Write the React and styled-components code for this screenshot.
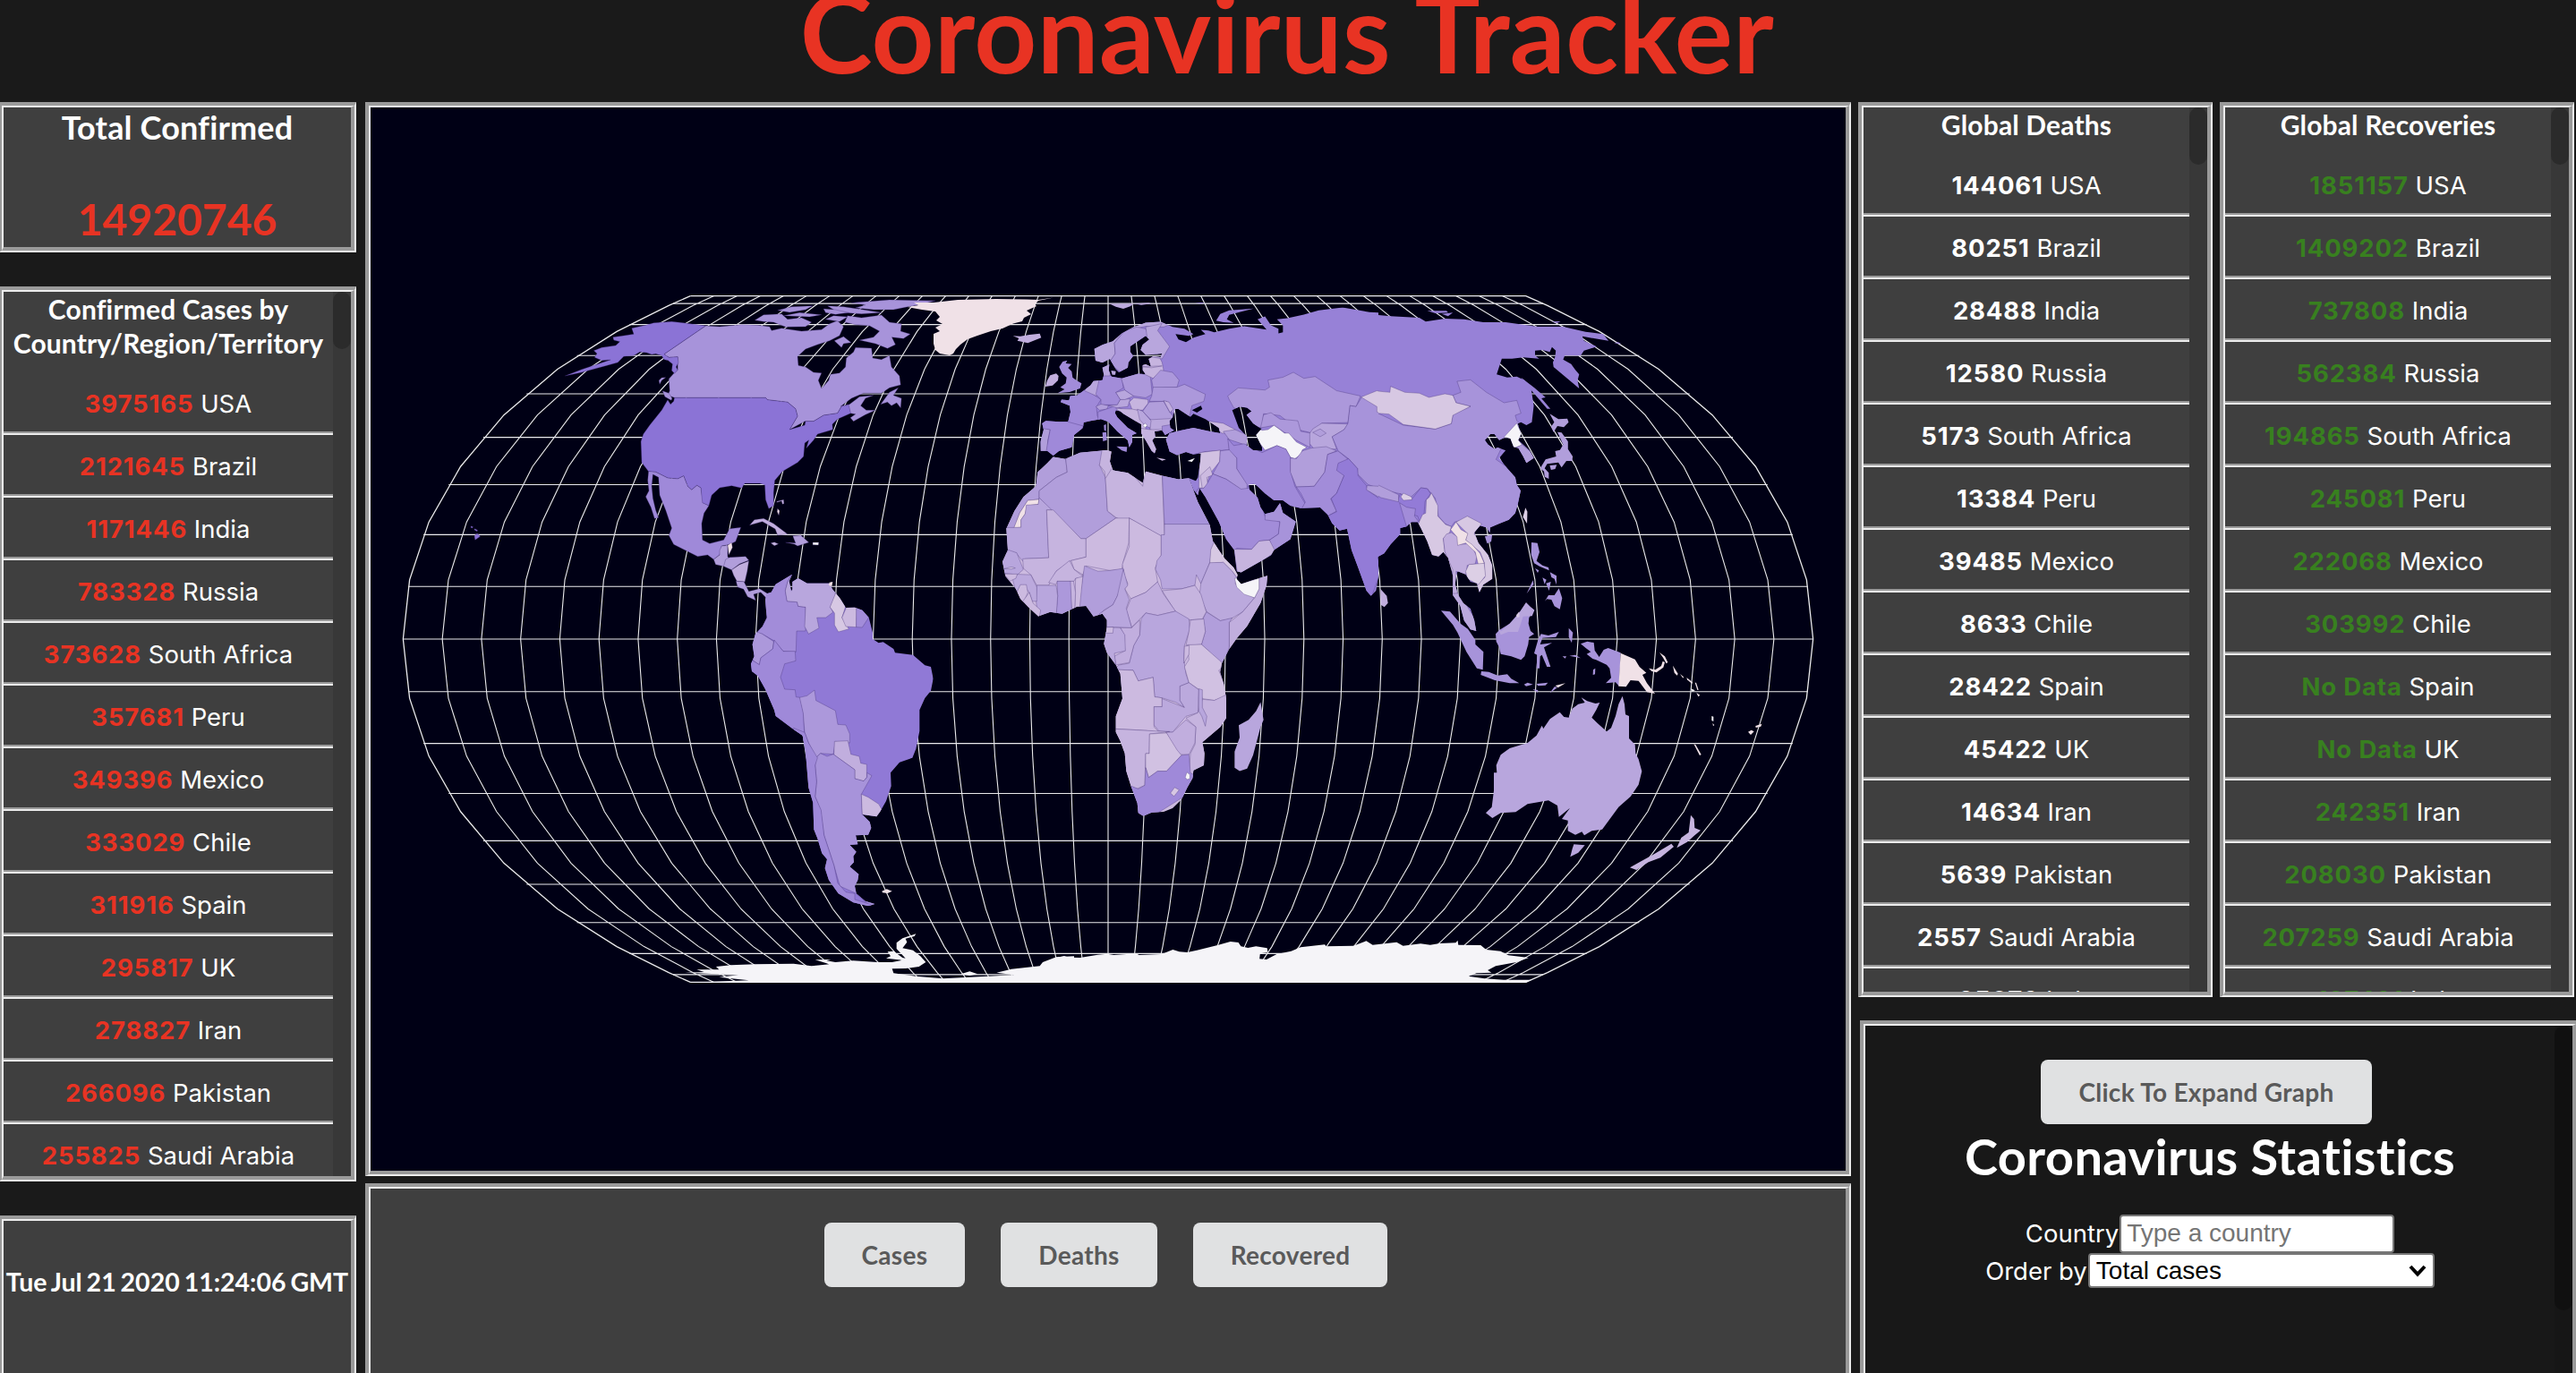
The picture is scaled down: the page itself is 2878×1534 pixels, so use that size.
import React from "react";
import styled, { createGlobalStyle } from "styled-components";

const GlobalStyle = createGlobalStyle`
  * { box-sizing: border-box; }
  html, body, #root { height: 100%; }
  body {
    margin: 0;
    overflow: hidden;
    background: #1a1a1a;
    color: #fff;
    font-family: Lato, "Liberation Sans", sans-serif;
  }
  h1, h2, h3, h4, p { margin: 0; }
`;

/* ---------- layout ---------- */

const Page = styled.div`
  height: 100%;
  display: flex;
  flex-direction: column;
  overflow: hidden;
`;

const Header = styled.header`
  flex: none;
  height: 114px;
  display: flex;
  justify-content: center;
  align-items: flex-start;
  padding-right: 2px;
`;

const Title = styled.h1`
  margin-top: -15px;
  color: #e83323;
  font-size: 122px;
  font-weight: 700;
  letter-spacing: 0.4px;
  line-height: 100px;
  white-space: nowrap;
`;

const Columns = styled.main`
  flex: 1;
  min-height: 0;
  display: grid;
  grid-template-columns: 400px 1660px 802px;
  column-gap: 10px;
  margin-left: -2px;
`;

const LeftColumn = styled.div`
  display: grid;
  grid-template-rows: 168px 1000px 200px;
  row-gap: 38px;
`;

const MiddleColumn = styled.div`
  display: grid;
  grid-template-rows: 1200px 240px;
  row-gap: 8px;
`;

const RightColumn = styled.div`
  display: grid;
  grid-template-rows: 1000px 440px;
  row-gap: 26px;
  margin-left: -2px;
`;

const ListPair = styled.div`
  display: grid;
  grid-template-columns: 396px 396px;
  column-gap: 8px;
`;

/* Grooved frame: a 4px grey band next to a 2px light band on every side. */
const Frame = styled.section`
  min-width: 0;
  min-height: 0;
  display: flex;
  border-style: solid;
  border-width: 4px 2px 2px 4px;
  border-color: #9a9a9a #ededed #ededed #9a9a9a;
  margin-left: ${(p) => p.$inset || 0}px;
`;

const FrameBody = styled.div`
  flex: 1;
  min-width: 0;
  display: flex;
  overflow: hidden;
  border-style: solid;
  border-width: 2px 4px 4px 2px;
  border-color: #ededed #9a9a9a #9a9a9a #ededed;
  background: ${(p) => p.$bg || "#3f3f3f"};
`;

const Stack = styled.div`
  flex: 1;
  min-width: 0;
  display: flex;
  flex-direction: column;
  align-items: center;
  text-align: center;
  padding-top: ${(p) => p.$top || 0}px;
`;

/* ---------- text ---------- */

const TotalLabel = styled.h3`
  font-size: 36px;
  letter-spacing: 0.15px;
  line-height: 44px;
`;

const TotalValue = styled.h2`
  margin-top: 51px;
  color: #e83323;
  font-size: 48px;
  line-height: 60px;
`;

const ListHeading = styled.h4`
  width: 100%;
  height: ${(p) => p.$height}px;
  flex: none;
  font-size: 30px;
  letter-spacing: 0.15px;
  line-height: 38px;
`;

const Timestamp = styled.h4`
  font-size: 28.5px;
  word-spacing: -2px;
  line-height: 38px;
  white-space: nowrap;
`;

const List = styled.ul`
  width: 100%;
  margin: 0;
  padding: 0;
  list-style: none;
`;

const Row = styled.li`
  height: 70px;
  padding-top: 2px;
  line-height: 66px;
  font-family: Inter, "Liberation Sans", sans-serif;
  font-size: 27.5px;
  white-space: nowrap;
  border-bottom: 2px solid #ededed;
  box-shadow: inset 0 -2px #9a9a9a;
`;

const Count = styled.strong`
  color: ${(p) => p.$color};
  font-weight: 700;
  letter-spacing: 0.85px;
`;

/* ---------- scrollbar ---------- */

const Track = styled.div`
  flex: none;
  width: 20px;
  background: ${(p) => p.$bg || "#383838"};
`;

const Thumb = styled.div`
  height: ${(p) => p.$length}px;
  border-radius: 10px;
  background: ${(p) => p.$bg || "#2b2b2b"};
`;

/* ---------- controls ---------- */

const Button = styled.button`
  height: 72px;
  margin: 0;
  margin-right: ${(p) => p.$shift || 0}px;
  padding: 0 42px;
  border: 0;
  border-radius: 8px;
  background: #e0e1e2;
  color: #5a5a5a;
  font: 700 28px Lato, sans-serif;
  letter-spacing: 0.3px;
  white-space: nowrap;
`;

const ButtonRow = styled.div`
  display: flex;
  gap: 40px;
  margin-right: 5px;
`;

const StatsTitle = styled.h1`
  font-size: 56px;
  letter-spacing: 0.4px;
  line-height: 72px;
  margin-bottom: 28px;
  white-space: nowrap;
`;

const Field = styled.label`
  display: flex;
  align-items: center;
  height: ${(p) => p.$height}px;
  font: 400 27.5px Inter, "Liberation Sans", sans-serif;
`;

const TextInput = styled.input`
  width: 307px;
  height: 43px;
  margin: 0 0 0 1px;
  padding: 0 6px;
  border: 2px solid #767676;
  border-radius: 4px;
  background: #fff;
  font: 28px "Liberation Sans", Arial, sans-serif;
  &::placeholder { color: #757575; opacity: 1; }
`;

const SelectBox = styled.span`
  width: 387px;
  height: 39px;
  margin-left: 1px;
  padding: 0 7px 0 7px;
  display: flex;
  align-items: center;
  justify-content: space-between;
  border: 2px solid #767676;
  border-radius: 4px;
  background: #fff;
  color: #000;
  font: 28px "Liberation Sans", Arial, sans-serif;
`;

/* ---------- data ---------- */

const COUNTRIES = ["USA", "Brazil", "India", "Russia", "South Africa", "Peru", "Mexico", "Chile", "Spain", "UK", "Iran", "Pakistan", "Saudi Arabia", "Italy"];
const CONFIRMED = ["3975165", "2121645", "1171446", "783328", "373628", "357681", "349396", "333029", "311916", "295817", "278827", "266096", "255825"];
const DEATHS = ["144061", "80251", "28488", "12580", "5173", "13384", "39485", "8633", "28422", "45422", "14634", "5639", "2557", "35073"];
const RECOVERED = ["1851157", "1409202", "737808", "562384", "194865", "245081", "222068", "303992", "No Data", "No Data", "242351", "208030", "207259", "197431"];

/* ---------- map ---------- */

const CX = 1238;
const CY = 714;
const SCALE = 291;

// Equal Earth projection, degrees in and pixels out.
function project(lon, lat) {
  const M = Math.sqrt(3) / 2;
  const l = (lon * Math.PI) / 180;
  const t = Math.asin(M * Math.sin((lat * Math.PI) / 180));
  const t2 = t * t;
  const t6 = t2 * t2 * t2;
  const x = (l * Math.cos(t)) / (M * (1.340264 - 3 * 0.081106 * t2 + t6 * (7 * 0.000893 + 9 * 0.003796 * t2)));
  const y = t * (1.340264 - 0.081106 * t2 + t6 * (0.000893 + 0.003796 * t2));
  return `${(CX + SCALE * x).toFixed(2)} ${(CY - SCALE * y).toFixed(2)}`;
}

function meridian(lon) {
  const pts = [];
  for (let i = -8; i <= 8; i += 1) pts.push(project(lon, i * 11.25));
  return `M${pts.join("L")}`;
}

const parallel = (lat) => `M${project(-180, lat)}L${project(180, lat)}`;

const steps = (from, to) => {
  const out = [];
  for (let v = from; v <= to; v += 10) out.push(v);
  return out;
};

const GRATICULE = [...steps(-170, 170).map(meridian), ...steps(-80, 80).map(parallel)].join("");
const SPHERE = [meridian(-180), meridian(180), parallel(90), parallel(-90)].join("");

const P = {
  usa: "#8b73d6", brazil: "#9079d6", india: "#937bd7", russia: "#9781d7",
  a: "#9f89d9", b: "#a28cd9", c: "#a793da", d: "#ac98db", e: "#b19edb", f: "#b8a6dd",
  g: "#bba9dd", h: "#c1aede", i: "#c6b4df", j: "#ccbae0", k: "#d1c1e2", l: "#d7c8e3",
  m: "#dccfe5", n: "#f0e1e7", w: "#f5f4f8",
};

// Each sheet has its own coordinate grid: origin in map pixels and units per pixel.
const NORTH_AMERICA = [
  [P.c, "870 162 905 165 960 158 1000 160 1030 165 1035 178 1060 170 1110 180 1160 175 1180 155 1200 145 1215 165 1205 195 1180 212 1150 225 1120 240 1100 265 1102 295 1120 300 1140 318 1160 320 1152 345 1160 372 1178 345 1182 325 1205 320 1220 300 1222 270 1240 250 1245 235 1285 237 1288 270 1310 275 1330 262 1335 300 1355 330 1358 360 1330 370 1310 388 1265 388 1235 405 1208 432 1230 425 1255 400 1290 395 1270 405 1258 430 1272 445 1295 445 1270 460 1240 482 1232 470 1245 458 1232 455 1228 435 1210 432 1200 455 1165 462 1140 482 1118 482 1080 510 1100 465 1095 440 1075 418 1025 410 1020 403 792 403 775 395 780 380 778 340 790 322 800 310 800 266 778 268 766 257"],
  [P.usa, "785 148 815 152 870 162 766 257 778 268 800 266 802 285 796 300 800 310 792 322 785 312 787 290 776 278 766 275 760 262 745 256 735 258 722 252 705 250 690 262 665 265 650 285 620 296 560 318 518 330 560 308 600 290 632 276 610 278 592 268 598 255 590 245 610 235 645 228 655 215 640 210 638 200 665 195 690 190 685 170 720 160 740 152"],
  [P.usa, "792 403 1020 403 1025 410 1075 418 1095 440 1100 465 1080 510 1118 495 1120 482 1140 482 1165 462 1200 455 1210 432 1228 427 1233 455 1200 475 1187 492 1188 510 1150 525 1140 545 1122 572 1128 545 1118 555 1115 600 1100 620 1062 650 1043 680 1040 720 1040 765 1028 775 1020 745 1018 695 1005 690 968 690 960 706 935 698 905 705 885 730 878 765 860 755 858 705 848 697 835 712 825 700 815 665 800 675 775 672 745 652 727 650 710 620 708 550 714 525 730 495 760 445 775 410 782 425 790 415"],
  [P.a, "727 650 745 652 775 672 800 675 815 665 825 700 835 712 848 697 858 705 862 755 878 765 866 790 860 825 862 880 880 892 915 880 930 842 958 838 945 885 930 895 910 900 905 930 890 945 875 930 850 935 820 915 790 895 778 865 785 840 770 780 755 730 752 670 738 660 735 700 738 740 745 780 752 805 742 808 733 770 720 735 728 715 725 680"],
  [P.e, "890 945 905 930 905 915 910 900 925 898 925 935 930 945 915 968 895 962"],
  [P.n, "925 898 935 888 937 905 928 930"],
  [P.e, "915 968 920 945 930 938 970 935 978 948 955 960 935 980"],
  [P.h, "935 980 955 962 978 950 974 985 968 1020 948 1018 940 998"],
  [P.e, "946 1018 966 1020 978 1052 1005 1043 1025 1060 1022 1075 1008 1055 990 1062 995 1082 975 1070 965 1045 950 1038"],
  [P.h, "980 830 992 812 1015 808 1040 825 1075 860 1050 864 1044 843 1012 818"],
  [P.e, "1070 888 1095 890 1088 866 1108 864 1128 888 1100 900 1092 894"],
  [P.i, "1033 890 1042 887 1052 893 1042 899"],
  [P.w, "1138 888 1153 888 1152 897 1138 896"],
  [P.n, "1050 775 1055 782 1053 797 1049 785"],
  [P.i, "1048 751 1065 745 1066 758 1062 760 1060 749 1048 754"],
  [P.usa, "293 880 291 866 298 858 306 868"],
  [P.usa, "283 833 288 836 286 840 282 838"],
  [P.usa, "292 842 299 847 298 851 291 846"],
  [P.c, "762 380 778 388 786 405 784 412 768 400"],
  [P.c, "755 358 753 345 760 336 770 335 760 345"],
  [P.c, "1308 425 1330 385 1352 370 1340 395 1360 405 1358 437 1348 420 1335 430 1325 418"],
  [P.c, "993 143 1015 125 1060 122 1075 140 1110 135 1135 150 1120 165 1070 166 1040 150 1015 148"],
  [P.c, "1218 150 1225 128 1260 135 1310 126 1330 150 1360 155 1358 180 1382 190 1365 205 1336 200 1345 225 1325 238 1295 222 1255 210 1290 200 1305 180 1280 162 1245 158"],
  [P.c, "1235 85 1330 75 1445 78 1400 92 1340 108 1290 108 1245 102 1270 92"],
  [P.c, "1175 95 1215 98 1250 105 1310 118 1260 122 1200 116"],
  [P.c, "1050 110 1085 98 1138 95 1120 108 1080 117"],
  [P.c, "1065 128 1105 118 1160 125 1130 132"],
  [P.c, "1165 105 1195 108 1228 118 1195 124 1170 118"],
  [P.c, "1170 140 1190 128 1225 132 1205 148"],
  [P.c, "1192 212 1215 198 1234 218 1215 222 1210 235"],
];

const GREENLAND = [
  [P.n, "1014 343 1026 341 1021 338 1043 338 1070 335 1113 334 1147 334.500 1160 335 1177 332.500 1160 336 1156 340 1158 342 1147 347 1152 351 1144 355 1142 359 1132 361.500 1120 367 1107 370 1092 375 1081 379 1073 385 1068 390 1065 395 1061 397 1050 395 1045 391 1043 384 1043 373 1050 370 1045 366 1053 362 1046 358 1050 354 1045 348 1030 346"],
];

const SOUTH_AMERICA = {
  outline: "470 190 485 185 500 158 555 125 545 148 552 182 556 175 556 150 575 138 605 155 680 155 690 175 715 205 735 237 765 236 790 245 812 270 825 320 825 342 845 355 860 352 895 375 900 388 960 395 1000 430 1020 435 1028 475 1020 515 1000 540 982 580 982 650 970 710 958 740 915 755 885 790 887 835 870 885 850 920 838 937 790 930 815 955 820 975 810 998 768 1000 775 1030 748 1032 770 1055 760 1070 762 1090 748 1105 778 1130 775 1150 765 1170 770 1195 800 1220 832 1230 810 1237 760 1225 710 1195 678 1150 665 1110 672 1080 655 1060 640 1010 628 980 625 890 610 840 600 720 590 665 560 645 500 600 495 580 465 510 440 465 420 450 417 425 428 400 422 360 432 325 455 300 470 270 465 210",
  base: P.brazil,
  areas: [
    [P.b, "435 322 455 300 470 270 455 190 500 145 560 118 540 150 532 180 538 215 572 218 575 232 600 235 600 315 570 315 568 385 525 383 495 348 455 325"],
    [P.f, "560 118 540 150 532 180 538 215 572 218 575 232 600 235 597 300 610 325 645 305 638 270 668 270 692 252 683 235 700 195 700 130"],
    [P.l, "702 185 682 235 697 255 697 295 710 318 745 308 722 270 735 230"],
    [P.j, "735 225 735 240 722 270 735 300 770 302 772 225"],
    [P.b, "774 225 770 240 770 302 790 303 815 265"],
    [P.d, "430 315 455 325 493 350 490 375 450 405 445 428 425 415 410 390"],
    [P.a, "400 400 425 415 445 428 450 405 490 375 495 345 525 383 565 383 567 415 530 425 516 470 530 510 565 512 568 536 582 538 593 590 595 640 597 660 590 680 400 620"],
    [P.d, "580 538 605 532 630 513 635 548 700 582 708 628 735 630 748 660 748 690 700 685 693 728 650 725 635 740 610 690 597 655 592 590"],
    [P.h, "697 685 742 683 752 728 780 735 785 758 805 762 805 805 795 818 765 810 765 780 695 730"],
    [P.c, "635 740 650 725 672 735 693 728 765 780 765 810 795 818 806 805 806 790 822 800 787 862 790 930 820 945 900 1000 832 1250 770 1195 715 1170 695 1100 662 1000 650 915 632 870 637 820 632 765"],
    [P.a, "597 655 610 690 640 740 632 765 637 820 632 870 652 915 662 1000 695 1100 708 1160 735 1190 765 1195 765 1215 815 1230 835 1245 600 1250 560 640"],
    [P.j, "787 862 810 872 845 895 860 920 835 945 790 930"],
  ],
};

const SOUTH_SHEET = [
  [P.n, "856 1187 872 1180 890 1187 875 1194 858 1192"],
  [P.n, "678 162 680 152 691 150 688 165"],
  [P.w, "195 1460 260 1458 235 1450 310 1450 300 1440 350 1435 430 1432 560 1430 620 1438 680 1432 632 1417 685 1416 670 1420 700 1425 760 1420 840 1425 890 1425 925 1418 870 1412 885 1405 875 1390 895 1388 925 1410 935 1412 905 1380 905 1360 925 1345 970 1330 965 1338 935 1346 940 1358 925 1378 960 1385 985 1405 1003 1425 980 1440 935 1446 890 1447 895 1462 970 1472 1060 1480 1210 1472 1300 1468 1240 1460 1290 1448 1385 1438 1395 1425 1440 1408 1500 1405 1500 1493 210 1493 410 1486 310 1475 375 1468"],
  [P.w, "1120 1465 1150 1456 1177 1465 1150 1470"],
];

const ANTARCTICA = [
  [P.w, "0 120 25 114 40 119 75 120 130 110 160 107 180 111 250 106 260 111 330 108 365 93 385 100 410 102 440 95 505 78 545 66 570 69 578 82 600 87 625 82 660 88 662 102 638 106 636 124 658 126 690 108 735 98 765 85 840 76 845 82 930 80 970 64 990 77 1065 68 1085 80 1140 73 1170 77 1200 72 1250 70 1256 62 1258 77 1328 78 1345 93 1390 98 1415 112 1478 120 1440 135 1375 148 1350 162 1362 170 1315 172 1290 182 1340 190 1400 194 1488 194 1470 203 0 203"],
];

const AFRICA = {
  outline: "290 507 330 513 380 495 470 488 485 492 480 520 490 545 540 552 590 580 600 548 655 560 710 570 745 567 755 590 775 635 800 675 815 700 825 745 845 770 865 795 895 820 908 840 905 852 920 866 960 855 1008 843 1005 870 985 920 940 985 905 1020 880 1050 855 1090 850 1115 862 1150 870 1190 870 1245 850 1270 790 1313 797 1345 795 1378 760 1393 757 1415 740 1440 720 1475 690 1500 660 1510 620 1512 592 1522 575 1513 572 1485 552 1440 535 1395 530 1345 515 1310 500 1285 500 1240 522 1190 515 1120 500 1095 470 1060 460 1035 470 990 470 968 455 950 425 958 400 928 370 930 320 950 280 945 240 957 205 930 180 908 165 880 130 845 120 803 138 770 133 710 160 660 190 620 232 590 238 550 270 525",
  base: P.j,
  areas: [
    [P.e, "220 495 290 495 332 513 337 550 300 565 243 603 243 627 205 630 178 665 160 707 130 712 100 700"],
    [P.n, "243 627 240 641 202 645 196 668 182 685 182 706 158 708 178 665 205 630"],
    [P.f, "120 707 182 706 182 685 196 668 200 643 240 641 243 622 290 657 268 657 275 792 195 795 188 802 165 778 140 775 110 785"],
    [P.e, "332 513 380 485 470 480 445 530 465 565 472 660 500 680 400 738 383 738 243 622 243 603 300 565 337 550"],
    [P.i, "455 480 500 480 500 548 465 568 462 548 445 530"],
    [P.i, "465 568 490 535 540 540 590 590 600 535 655 548 663 728 650 730 545 680 530 690 500 678 472 660"],
    [P.c, "655 548 780 555 820 698 663 698"],
    [P.i, "268 657 290 657 383 738 400 738 400 790 350 800 300 830 275 870 235 870 215 840 190 822 188 795 275 792"],
    [P.j, "500 680 545 680 543 750 525 802 520 825 480 828 400 815 390 840 360 825 350 800 400 790 400 738"],
    [P.j, "545 680 652 730 652 785 632 820 640 860 600 890 550 908 530 880 540 865 525 835 522 810 545 760"],
    [P.f, "663 697 830 697 855 755 820 775 815 805 785 865 770 840 765 870 720 880 690 880 655 880 650 855 633 825 638 800 652 785 652 727 663 727"],
    [P.l, "818 770 830 745 920 830 905 848 890 830 860 805 815 808"],
    [P.g, "815 806 860 805 890 830 905 848 900 865 930 890 965 905 925 945 885 965 850 970 805 945 780 900 785 865"],
    [P.h, "980 840 1020 835 1010 920 900 1060 880 1045 880 975 925 945 965 905 980 880"],
    [P.w, "898 850 908 850 920 865 980 850 980 880 965 905 930 895 905 875"],
    [P.e, "803 945 850 970 890 962 880 975 880 1045 860 1095 787 1037 800 1000 792 965"],
    [P.i, "655 885 720 880 765 870 785 895 803 945 790 965 745 968 700 945 670 905"],
    [P.h, "550 908 600 890 640 860 660 895 700 943 640 955 600 948 575 970 553 988 535 940"],
    [P.e, "395 815 440 830 480 828 525 822 530 850 505 900 490 925 460 940 425 970 395 940 375 930 385 870"],
    [P.f, "525 825 540 870 530 880 545 910 535 935 553 990 500 988 465 990 445 950 490 925 505 900"],
    [P.j, "365 850 390 840 385 880 378 940 362 940"],
    [P.i, "345 858 358 858 365 890 362 940 352 940"],
    [P.d, "303 858 348 858 352 940 320 960 300 948 305 900"],
    [P.f, "235 870 300 870 305 900 300 960 240 965 232 910"],
    [P.i, "275 862 300 830 345 800 360 825 390 845 365 850 360 858 303 858 300 868"],
    [P.g, "150 838 215 840 235 875 235 915 220 915 210 890 190 870 165 890"],
    [P.f, "110 800 140 770 168 778 190 825 170 840 120 835"],
    [P.k, "125 823 150 818 163 821 150 824"],
    [P.j, "125 838 170 838 165 850 145 858"],
    [P.j, "165 895 180 868 200 868 205 890 190 920"],
    [P.j, "188 915 210 890 222 920 248 940 242 965"],
    [P.f, "585 965 600 948 640 955 700 943 745 965 748 995 730 1040 728 1080 735 1120 745 1145 715 1155 715 1195 730 1215 700 1200 655 1188 630 1185 625 1130 575 1140 558 1110 495 1108 510 1095 545 1090 560 1040 580 1010"],
    [P.h, "515 990 553 990 580 968 580 1010 560 1040 545 1088 500 1095 495 1070 530 1055 528 1010"],
    [P.g, "455 988 515 990 530 1010 532 1055 495 1062 500 1095 440 1060"],
    [P.j, "465 988 492 988 490 1005 462 1005"],
    [P.i, "750 968 795 965 800 1000 787 1037 735 1040 745 1000"],
    [P.k, "740 1038 787 1037 865 1095 845 1110 880 1180 830 1195 790 1190 780 1165 745 1145 730 1100 745 1080"],
    [P.j, "730 1042 746 1040 745 1065 728 1090"],
    [P.j, "500 1108 558 1110 575 1140 625 1130 630 1185 655 1188 655 1213 628 1213 628 1270 645 1285 600 1280 490 1275 480 1240"],
    [P.g, "628 1213 655 1213 655 1190 730 1215 715 1195 715 1155 745 1145 778 1165 775 1230 735 1240 690 1285 645 1282 628 1265"],
    [P.i, "790 1192 830 1195 880 1175 880 1250 810 1320 810 1390 760 1415 745 1400 750 1345 765 1320 768 1270 735 1245 775 1230"],
    [P.f, "778 1162 790 1165 790 1215 805 1240 800 1268 788 1240 778 1225"],
    [P.h, "668 1285 690 1285 735 1250 768 1270 765 1315 745 1348 718 1348 700 1335"],
    [P.i, "480 1275 600 1280 645 1282 680 1283 613 1290 612 1345 600 1345 597 1435 570 1445 540 1435 490 1340"],
    [P.k, "613 1290 670 1287 705 1335 720 1350 670 1395 640 1395 610 1413 600 1385 600 1345 612 1345"],
    [P.a, "530 1430 575 1445 597 1435 600 1385 610 1413 640 1395 670 1395 720 1350 745 1348 750 1400 775 1410 760 1450 590 1540"],
    [P.w, "733 1412 738 1398 748 1405 748 1416 738 1419"],
    [P.l, "683 1457 697 1441 712 1448 695 1466"],
  ],
};

const WEST_EURASIA = {
  outline:
    "290 503 270 490 248 490 247 465 258 430 253 412 265 405 310 408 340 408 348 380 345 362 315 352 318 345 343 347 347 335 370 333 395 318 415 305 425 293 455 290 460 275 455 255 478 246 476 262 485 280 520 285 575 272 600 274 590 262 590 248 600 245 618 252 610 230 625 223 650 225 655 215 600 219 583 205 590 190 612 175 600 165 570 182 548 195 548 210 558 222 542 240 540 255 510 268 500 260 480 230 455 240 432 235 428 202 455 190 490 180 520 158 560 140 600 128 650 125 690 140 730 145 760 160 745 165 700 160 710 175 735 183 760 170 800 160 785 148 810 150 830 155 880 145 930 138 1005 147 975 118 1000 110 1020 135 1045 145 1045 158 1060 155 1060 135 1040 118 1075 115 1130 105 1180 93 1260 85 1350 98 1400 100 1400 780 1378 790 1383 830 1372 885 1355 900 1340 885 1310 815 1290 770 1275 710 1250 715 1225 695 1210 670 1185 650 1120 652 1085 645 1060 630 1030 630 1000 610 975 590 965 583 945 585 948 600 975 622 985 650 1000 668 1030 662 1050 638 1060 665 1103 690 1085 740 1030 770 1020 785 920 833 905 830 897 770 870 740 845 690 800 620 780 595 775 615 760 600 745 567 768 575 775 565 783 520 785 497 760 500 735 493 705 502 680 492 668 458 680 440 720 432 760 425 815 435 850 440 845 425 800 400 760 385 750 394 728 382 710 372 698 372 690 395 680 405 682 425 695 432 665 445 655 432 630 435 632 450 622 460 635 485 630 497 620 490 600 460 585 440 585 415 565 405 525 385 515 378 500 375 497 383 505 395 540 425 570 440 555 445 555 465 545 480 540 460 505 435 475 408 450 400 415 405 392 410 390 425 360 445 352 480 310 490" +
    "Z M755 375 785 362 790 372 772 382Z M890 375 915 365 940 368 955 378 938 388 960 412 988 428 970 445 990 480 990 490 960 488 938 474 940 450 912 425",
  base: P.russia,
  areas: [
    [P.e, "230 430 258 425 280 430 272 460 270 492 240 500"],
    [P.a, "240 395 345 405 392 418 340 520 265 500 272 465 280 430 255 427"],
    [P.a, "300 335 395 315 415 325 450 345 435 365 438 392 450 405 392 420 340 408"],
    [P.f, "395 320 425 280 445 288 440 320 435 335"],
    [P.b, "445 285 460 276 478 276 520 280 525 312 500 325 515 345 505 360 450 360 450 345 433 330"],
    [P.f, "445 278 445 235 490 235 480 278"],
    [P.e, "433 365 450 358 475 362 470 372 445 375"],
    [P.a, "440 380 475 370 500 362 520 372 500 385 570 440 570 500 440 420"],
    [P.f, "475 362 505 360 515 345 548 343 540 365 505 368"],
    [P.f, "500 325 530 318 560 335 530 345 515 345"],
    [P.d, "518 285 575 265 615 275 622 330 600 340 560 335 530 318"],
    [P.i, "580 235 640 215 655 240 660 262 625 285 600 275 580 270"],
    [P.i, "580 252 620 255 655 250"],
    [P.d, "620 290 650 262 690 268 712 290 705 310 625 312"],
    [P.d, "620 335 625 310 705 310 730 302 800 330 795 350 755 362 745 400 690 385 670 350 612 350"],
    [P.f, "400 190 600 110 690 130 660 140 600 138 560 145 530 150 495 185 498 215 480 240 430 250"],
    [P.d, "478 240 498 215 495 185 530 150 570 140 600 145 612 170 560 225 530 280"],
    [P.f, "560 215 575 180 605 170 600 140 630 135 655 130 640 150 680 195 655 230"],
    [P.i, "545 352 560 340 608 345 608 356 590 375 555 375"],
    [P.e, "590 378 612 352 660 350 680 380 700 400 620 405"],
    [P.h, "660 348 678 352 692 372 682 382"],
    [P.g, "612 402 700 398 700 425 640 434 615 430"],
    [P.i, "500 370 555 372 590 378 600 405 600 430 575 425"],
    [P.f, "572 372 590 378 618 405 615 425 600 420 580 402"],
    [P.i, "575 425 615 430 660 430 640 455 645 505 600 500"],
    [P.w, "590 418 598 412 606 418 598 424"],
    [P.b, "655 420 690 415 860 430 878 445 880 487 800 492 660 520"],
    [P.j, "805 405 860 412 900 430 900 440 855 440"],
    [P.e, "860 435 900 430 940 445 940 475 905 465 880 458"],
    [P.d, "880 345 875 335 910 312 1000 318 1015 310 1010 290 1060 282 1095 268 1130 285 1168 280 1240 320 1320 335 1305 365 1285 362 1278 410 1190 412 1160 440 1110 430 1050 390 995 385 990 425 960 420 930 380 895 368"],
    [P.d, "985 425 995 388 1020 382 1050 400 1110 405 1120 435 1155 440 1150 480 1105 460 1030 418"],
    [P.w, "965 440 972 425 990 432 1010 430 1030 418 1050 430 1065 440 1080 440 1105 465 1140 480 1125 487 1120 500 1100 512 1085 508 1070 485 1040 475 1000 488 975 460"],
    [P.f, "1150 440 1160 428 1190 412 1278 414 1265 430 1225 450 1240 485 1165 485 1150 470"],
    [P.e, "1160 438 1185 428 1205 440 1185 450"],
    [P.a, "875 455 895 475 930 470 990 495 1040 475 1070 485 1085 508 1085 545 1100 590 1135 640 1118 660 1040 650 960 590 940 590 905 540 905 510 880 490"],
    [P.e, "1085 510 1105 512 1125 490 1155 482 1205 478 1240 490 1210 500 1200 550 1165 590 1105 592 1085 550"],
    [P.b, "1118 660 1135 635 1120 610 1105 592 1165 590 1200 550 1210 500 1245 490 1280 515 1265 530 1245 530 1265 560 1240 610 1220 625 1240 660 1215 672 1200 690"],
    [P.c, "1245 490 1225 450 1265 430 1278 412 1285 362 1305 365 1325 337 1400 370 1500 400 1500 640 1445 615 1345 585 1310 555 1310 540 1280 512"],
    [P.india, "1245 525 1280 512 1310 540 1312 560 1340 588 1345 602 1400 635 1500 640 1500 820 1400 800 1350 920 1180 700 1215 672 1240 662 1222 625 1240 610 1265 560 1240 545"],
    [P.l, "1322 338 1375 320 1420 330 1500 320 1500 418 1400 388 1375 380 1375 365"],
    [P.e, "1342 588 1380 590 1450 620 1445 637 1400 630 1340 600"],
    [P.k, "780 495 850 488 848 520 815 555 800 595 778 595"],
    [P.j, "815 535 825 558 805 565 808 585 790 598 783 560"],
    [P.d, "850 490 880 487 905 510 905 540 940 585 940 605 920 600 870 570 825 555 848 520"],
    [P.b, "775 597 795 595 808 580 825 555 870 570 920 598 945 595 980 620 1000 675 1050 690 1045 725 1015 742 980 745 955 768 905 765 895 775 760 620"],
    [P.c, "1000 685 1000 660 1060 630 1120 690 1085 755 1025 775 1015 742 1045 725 1050 690"],
    [P.i, "895 768 955 768 980 745 1015 742 1035 775 910 850"],
  ],
};

const EUROPE_ISLANDS = [
  [P.b, "322 282 337 278 332 288 352 290 340 303 352 315 355 335 368 345 385 355 380 372 345 384 305 388 328 375 314 368 332 355 335 335 320 322 310 300"],
  [P.h, "263 366 270 345 280 328 300 322 308 330 306 345 288 362"],
  [P.h, "155 196 180 197 210 192 245 188 250 202 205 220 170 212 175 204"],
  [P.a, "502 566 538 568 536 585 520 580"],
  [P.a, "455 520 468 518 470 545 457 549"],
  [P.a, "460 495 467 492 467 515 461 512"],
  [P.g, "478 88 560 88 548 97 525 105 500 98"],
  [P.g, "560 88 610 85 620 88 585 92"],
  [P.russia, "836 145 850 122 880 110 962 104 920 115 880 125 872 140 895 152 860 150"],
  [P.russia, "765 85 800 84 785 88"],
  [P.j, "636 604 668 610 655 614"],
  [P.w, "740 615 765 605 755 618"],
  [P.f, "484 312 500 314 498 326 488 326"],
];

const AFRICA_ISLANDS = [
  [P.f, "985 1200 995 1250 985 1270 960 1350 940 1388 915 1395 898 1385 898 1340 915 1300 912 1265 945 1250 970 1225"],
  [P.h, "1387 880 1408 900 1412 920 1400 931 1388 925"],
];

const EAST_EURASIA = {
  outline: "60 120 150 130 240 135 260 148 320 138 380 140 440 150 510 150 610 165 690 165 760 182 815 190 832 212 790 205 750 197 755 212 795 232 755 245 745 262 695 262 690 275 715 290 728 310 740 325 735 345 740 372 710 345 660 300 658 285 665 265 667 245 655 233 648 250 625 243 602 245 602 262 615 272 565 268 530 272 498 272 482 325 515 335 545 332 570 345 590 375 598 430 592 485 575 495 558 485 548 490 558 525 550 545 565 560 585 580 598 605 575 622 565 600 550 572 535 568 525 540 510 535 490 545 475 525 462 525 445 545 455 560 475 575 485 570 510 580 490 605 515 640 540 670 545 695 557 715 548 760 540 790 520 812 490 825 462 838 460 855 450 838 430 832 412 855 425 890 455 930 468 965 468 1010 440 1030 428 1055 420 1025 400 1020 385 995 360 985 355 1000 352 1030 362 1065 378 1092 400 1110 412 1150 418 1185 400 1180 380 1150 368 1100 345 1065 345 1000 330 940 315 920 300 935 280 930 265 885 245 840 235 820 215 820 200 835 180 840 180 860 150 895 130 925 112 935 112 1000 80 1000 80 120",
  base: P.russia,
  areas: [
    [P.c, "0 400 60 400 110 455 190 495 290 508 340 490 345 460 400 432 355 420 345 395 370 385 358 348 400 343 450 385 505 420 545 412 558 455 540 462 545 480 556 492 515 530 480 610 600 700 560 850 500 860 460 890 425 835 390 808 350 820 340 835 320 825 300 800 290 740 265 708 245 705 215 735 180 725 120 710 75 690 45 655 30 610 0 600"],
    [P.india, "30 600 45 655 78 690 172 750 180 725 215 745 245 705 265 708 275 725 258 750 255 790 245 835 235 800 205 790 200 860 112 1100 0 1000 0 600"],
    [P.l, "60 403 100 380 148 385 150 365 195 385 240 388 270 402 320 390 345 395 355 420 400 432 345 462 340 490 290 508 190 493 145 458 110 455"],
    [P.w, "545 488 560 525 550 545 562 562 535 572 527 552 505 535"],
    [P.e, "540 572 562 560 610 605 575 630"],
    [P.e, "75 690 100 690 175 728 175 752 120 738 78 712"],
    [P.m, "182 735 190 723 215 735 218 745 190 747"],
    [P.b, "178 755 200 770 228 775 225 800 242 825 200 835"],
    [P.l, "262 745 270 738 278 722 298 765 298 800 322 828 340 835 335 855 315 875 320 920 348 975 350 1010 330 950 300 950 260 935 235 830 250 795 260 790"],
    [P.h, "315 875 325 860 340 855 360 870 365 895 400 892 420 935 415 960 390 965 385 1000 355 985 360 1070 335 1060 345 980 320 920"],
    [P.l, "355 820 390 800 435 825 412 860 490 950 480 1020 428 1070 420 1030 445 1005 443 955 430 920 385 880 390 858"],
    [P.n, "338 845 355 820 370 845 392 858 385 880 405 895 430 925 443 958 425 965 415 920 385 890 360 898 358 870"],
    [P.m, "385 985 395 962 443 958 447 1000 425 1030 390 1010"],
    [P.g, "340 1060 365 1058 440 1190 400 1200"],
  ],
};

const EAST_ISLANDS = [
  [P.c, "445 868 468 862 465 885 452 892"],
  [P.m, "572 772 578 785 577 825 564 803"],
  [P.e, "648 457 675 475 703 473 707 485 692 502 672 498 660 518 652 500 662 485"],
  [P.e, "672 518 685 520 705 550 705 575 720 600 718 615 700 615 685 637 675 620 640 625 632 640 645 655 645 675 632 668 630 650 618 640 635 610 668 600 665 582 680 578 690 560"],
  [P.e, "648 630 670 628 665 642 652 645"],
  [P.russia, "558 335 600 370 635 402 622 405 650 440 640 440 600 390 568 352"],
  [P.russia, "265 112 325 112 330 118 290 120"],
  [P.russia, "310 122 345 118 330 130"],
  [P.russia, "655 148 682 147 670 153"],
  [P.russia, "850 220 862 217 872 223"],
];

const OCEANIA = [
  [P.c, "453 18 473 20 480 50 470 80 490 95 510 102 512 112 480 98 462 88 452 60"],
  [P.c, "515 118 537 130 537 160 530 140 520 135"],
  [P.c, "465 105 478 112 474 120"],
  [P.c, "490 136 503 143 497 158"],
  [P.c, "502 155 518 150 512 180"],
  [P.c, "498 215 510 195 530 195 545 172 556 205 548 242 530 232 520 210 505 208"],
  [P.c, "437 190 458 145 460 158"],
  [P.c, "333 325 345 312 380 290 415 250 435 220 450 235 463 245 445 270 443 290 450 315 462 325 445 335 442 360 430 400 418 412 385 400 350 392 345 370 335 350"],
  [P.f, "343 310 352 315 380 290 400 270 415 250 435 220 450 235 463 245 455 265 425 266 408 318 375 318 350 328"],
  [P.l, "402 262 412 250 413 268 405 270"],
  [P.c, "150 247 180 250 215 290 240 308 265 345 265 360 292 385 290 445 270 440 235 385 205 320 190 295"],
  [P.c, "285 450 310 452 340 464 372 460 385 475 412 490 380 490 330 480 283 462"],
  [P.c, "475 345 485 325 510 330 545 318 535 335 490 338 482 360 522 355 495 370 505 400 517 435 505 435 488 395 482 400 480 440 470 440 472 395 462 390"],
  [P.c, "578 305 592 320 588 355 578 335"],
  [P.c, "580 398 600 395 618 406 600 402"],
  [P.c, "557 400 570 400 566 407"],
  [P.c, "428 494 440 488 458 494 435 500"],
  [P.c, "470 492 508 488 500 497 475 499"],
  [P.c, "457 510 475 513 474 521"],
  [P.c, "515 523 530 502 540 504"],
  [P.n, "533 498 567 490 542 505"],
  [P.c, "660 445 667 440 666 460 659 462"],
  [P.c, "618 358 640 350 662 354 665 380 680 402 695 378 710 372 752 388 747 500 735 487 702 490 720 472 715 440 705 428 670 412 658 408 638 392 652 385 635 372"],
  [P.n, "752 389 800 410 815 435 838 455 825 462 840 490 867 525 840 520 812 482 785 480 770 502 745 500"],
  [P.n, "846 440 868 445 888 432 893 416 900 420 895 437 872 454 856 450"],
  [P.n, "882 387 900 400 910 420 905 424 894 404"],
  [P.n, "927 431 944 458 941 464 932 455"],
  [P.n, "951 459 963 469 961 473"],
  [P.n, "973 471 993 487 991 492 975 478"],
  [P.n, "1001 488 1005 488 1013 512 1009 513"],
  [P.w, "986 507 1001 514 992 519"],
  [P.n, "1006 522 1018 530 1012 535"],
  [P.w, "1057 600 1063 602 1063 618 1057 615"],
  [P.n, "1060 624 1066 630 1062 634"],
  [P.n, "997 694 1003 696 1022 729 1017 732"],
  [P.n, "1179 653 1190 647 1199 652 1188 663"],
  [P.n, "1204 633 1225 626 1222 635 1205 639"],
  [P.f, "620 538 640 550 668 558 682 555 670 580 655 605 675 625 705 652 720 640 735 600 745 560 758 533 765 560 768 595 780 600 780 675 800 695 802 725 812 745 823 785 812 830 785 870 745 905 690 980 655 985 630 1000 622 988 600 998 575 985 575 950 555 945 582 908 545 938 540 900 510 883 440 895 400 922 350 925 322 942 300 925 320 905 327 850 327 790 337 790 335 765 350 730 380 708 440 690 470 665 488 632 493 642 515 610 548 587 562 603 578 605 590 575 610 560 632 555"],
  [P.f, "595 1030 632 1033 610 1058 583 1072 590 1045"],
  [P.i, "987 932 998 945 1000 975 1020 983 1000 1000 975 1022 940 1042 955 1008 980 990"],
  [P.i, "922 1028 930 1038 885 1075 845 1090 805 1116 783 1108 815 1090 860 1065"],
];

const shape = (pts) => `M${pts}Z`;

function Sheet({ x, y, sx, sy, children }) {
  return <g transform={`translate(${x} ${y}) scale(${1 / sx} ${1 / sy})`}>{children}</g>;
}

const Area = styled.path`
  fill: ${(p) => p.$fill};
  stroke: rgba(60, 40, 110, 0.3);
  stroke-width: ${(p) => (p.$edge ? 1 : 0)}px;
  vector-effect: non-scaling-stroke;
`;

const Lines = styled.path`
  fill: none;
  stroke: #eaeaec;
  stroke-width: ${(p) => p.$width}px;
`;

function Areas({ items, edge }) {
  return items.map(([fill, pts], i) => <Area key={i} $fill={fill} $edge={edge} d={shape(pts)} />);
}

function Landmass({ id, land, from, to }) {
  return (
    <>
      <clipPath id={id}>
        <path clipRule="evenodd" d={shape(land.outline)} />
      </clipPath>
      <clipPath id={`${id}-span`}>
        <rect x={from} y={0} width={to - from} height={1600} />
      </clipPath>
      <g clipPath={`url(#${id}-span)`}>
        <g clipPath={`url(#${id})`}>
          <rect x={from} y={0} width={to - from} height={1600} fill={land.base} />
          <Areas items={land.areas} edge />
        </g>
      </g>
    </>
  );
}

const MapSvg = styled.svg`
  display: block;
  width: 1648px;
  height: 1188px;
`;

function WorldMap() {
  return (
    <MapSvg viewBox="414 120 1648 1188">
      <Lines $width={1.1} d={GRATICULE} />
      <Lines $width={1.3} d={SPHERE} />
      <Sheet x={400} y={310} sx={2.24} sy={3}><Areas items={NORTH_AMERICA} edge /></Sheet>
      <Areas items={GREENLAND} />
      <Sheet x={700} y={600} sx={3} sy={3}>
        <Landmass id="south-america" land={SOUTH_AMERICA} from={380} to={1100} />
        <Areas items={SOUTH_SHEET} />
      </Sheet>
      <Sheet x={1180} y={1030} sx={2.8} sy={3}><Areas items={ANTARCTICA} /></Sheet>
      <Sheet x={1080} y={310} sx={3} sy={2.529}>
        <Landmass id="africa" land={AFRICA} from={80} to={1100} />
        <Landmass id="west" land={WEST_EURASIA} from={200} to={1380} />
        <Areas items={AFRICA_ISLANDS} />
      </Sheet>
      <Sheet x={1080} y={310} sx={3} sy={3}><Areas items={EUROPE_ISLANDS} /></Sheet>
      <Sheet x={1500} y={310} sx={2.8} sy={3}>
        <Landmass id="east" land={EAST_EURASIA} from={112} to={900} />
        <Areas items={EAST_ISLANDS} />
      </Sheet>
      <Sheet x={1560} y={600} sx={3} sy={3}><Areas items={OCEANIA} /></Sheet>
    </MapSvg>
  );
}

/* ---------- components ---------- */

function Panel({ bg, inset, children }) {
  return (
    <Frame $inset={inset}>
      <FrameBody $bg={bg}>{children}</FrameBody>
    </Frame>
  );
}

function CountryList({ heading, headingHeight, values, color }) {
  return (
    <Panel>
      <Stack>
        <ListHeading $height={headingHeight}>{heading}</ListHeading>
        <List>
          {values.map((value, i) => (
            <Row key={COUNTRIES[i]}>
              <Count $color={color}>{value}</Count> {COUNTRIES[i]}
            </Row>
          ))}
        </List>
      </Stack>
      <Track><Thumb $length={64} /></Track>
    </Panel>
  );
}

export default function App() {
  return (
    <Page>
      <GlobalStyle />
      <Header><Title>Coronavirus Tracker</Title></Header>
      <Columns>
        <LeftColumn>
          <Panel>
            <Stack>
              <TotalLabel>Total Confirmed</TotalLabel>
              <TotalValue>14920746</TotalValue>
            </Stack>
          </Panel>
          <CountryList
            heading={<>Confirmed Cases by<br />Country/Region/Territory</>}
            headingHeight={90}
            values={CONFIRMED}
            color="#e83323"
          />
          <Panel>
            <Stack $top={49}><Timestamp>Tue Jul 21 2020 11:24:06 GMT</Timestamp></Stack>
          </Panel>
        </LeftColumn>
        <MiddleColumn>
          <Panel bg="#000015"><WorldMap /></Panel>
          <Panel>
            <Stack $top={38}>
              <ButtonRow>
                <Button>Cases</Button>
                <Button>Deaths</Button>
                <Button>Recovered</Button>
              </ButtonRow>
            </Stack>
          </Panel>
        </MiddleColumn>
        <RightColumn>
          <ListPair>
            <CountryList heading="Global Deaths" headingHeight={52} values={DEATHS} color="#fff" />
            <CountryList heading="Global Recoveries" headingHeight={52} values={RECOVERED} color="#38801f" />
          </ListPair>
          <Panel bg="#181818" inset={2}>
            <Stack $top={38}>
              <Button $shift={8}>Click To Expand Graph</Button>
              <StatsTitle>Coronavirus Statistics</StatsTitle>
              <Field $height={44}>Country<TextInput placeholder="Type a country" /></Field>
              <Field as="div" $height={39}>
                Order by
                <SelectBox>
                  Total cases
                  <svg width="20" height="14" viewBox="0 0 20 14" fill="none" stroke="#000" strokeWidth="4">
                    <path d="M2 2l8 8.500 8-8.500" />
                  </svg>
                </SelectBox>
              </Field>
            </Stack>
            <Track $bg="#161616"><Thumb $length={318} $bg="#101010" /></Track>
          </Panel>
        </RightColumn>
      </Columns>
    </Page>
  );
}
